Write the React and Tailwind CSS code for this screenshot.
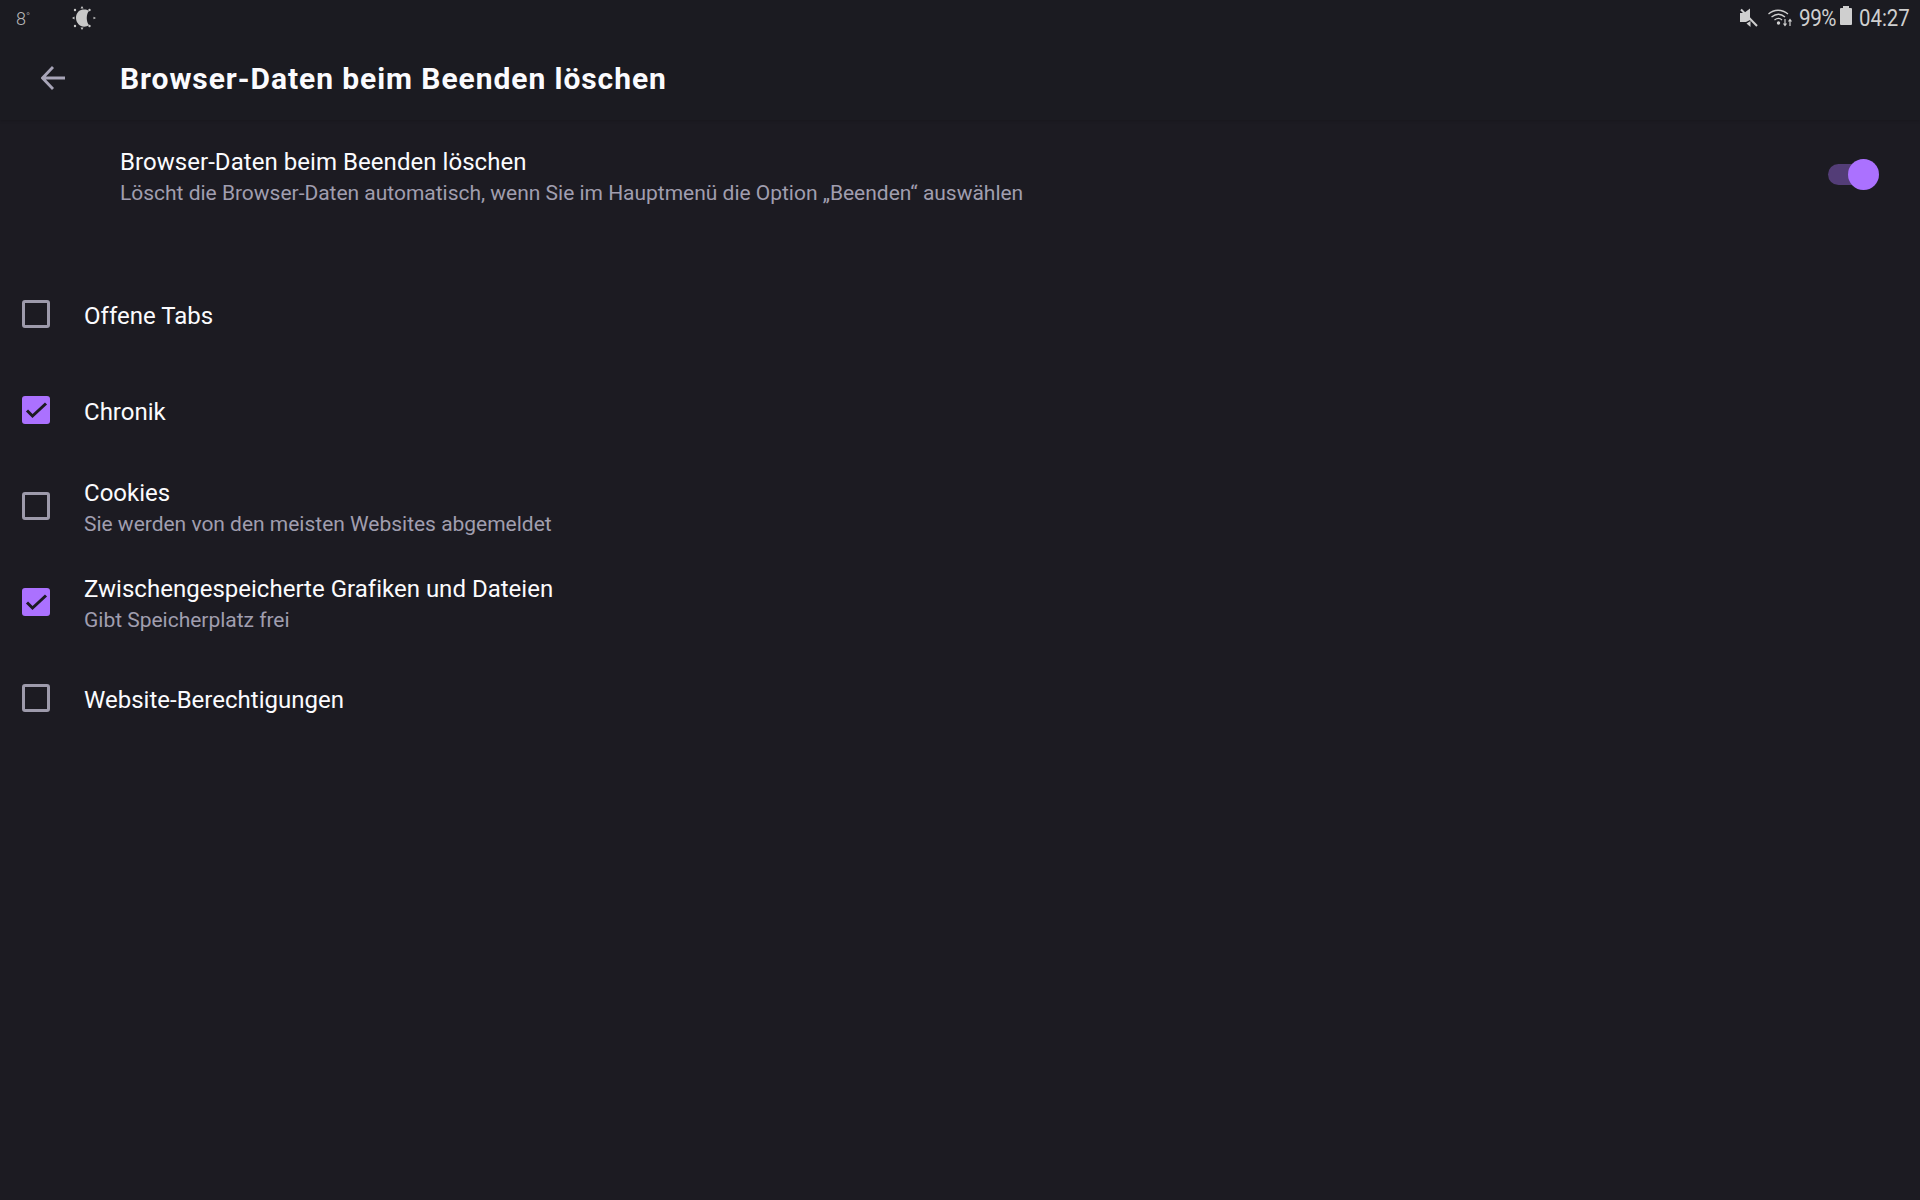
const font = { fontFamily: 'Roboto, sans-serif' };

function Box({ checked }) {
  if (checked) {
    return (
      <div className="mb-[2px] flex h-[28px] w-[28px] shrink-0 items-center justify-center rounded-[3px] bg-[#ab71ff]">
        <svg width="28" height="28" viewBox="0 0 28 28" fill="none">
          <path d="M5 14.500 L10.500 20 L24 7.500" stroke="#1c1b22" strokeWidth="3" />
        </svg>
      </div>
    );
  }
  return <div className="mb-[2px] h-[28px] w-[28px] shrink-0 rounded-[3px] border-[3px] border-[#9d9aab]" />;
}

function Row({ checked, title, sub }) {
  return (
    <div className="flex h-[96px] items-center pl-[22px]">
      <Box checked={checked} />
      <div className={sub ? 'ml-[34px] mt-[3px] flex flex-col' : 'ml-[34px] mt-[2px] flex flex-col'}>
        <div className="text-[24px] leading-[31px] tracking-[0.01px] text-[#fbfbfe]">{title}</div>
        {sub && <div className="text-[21px] leading-[31px] tracking-[-0.015px] text-[#a09eaf]">{sub}</div>}
      </div>
    </div>
  );
}

export default function App() {
  return (
    <div className="flex h-[1200px] w-[1920px] flex-col overflow-hidden bg-[#1c1b22]" style={font}>
      <div className="relative flex h-[120px] flex-col bg-[#1b1b21] shadow-[0_1px_3px_rgba(0,0,0,0.15)]">
        <div className="flex h-[36px] items-center justify-between pl-[16px] pr-[12px]">
          <div className="flex items-center">
            <span className="w-[55px] text-[18px] font-light text-[#b8b8b8]">8<span className="relative -top-[5px] text-[11px]">°</span></span>
            <svg width="26" height="26" viewBox="0 0 26 26" fill="#c8c8c8">
              <path d="M10 5 C14 4 17 5 18 6 C15 9 15 17 18 20 C16 22 12 22 10 21 C6 19 5 15 5 13 C5 9 7 6 10 5 Z" />
              <path d="M11 1 L12.500 3.500 L9.500 3.500 Z M11 25 L12.500 22.500 L9.500 22.500 Z M1 13 L3.500 11.500 L3.500 14.500 Z M25 13 L22.500 11.800 L22.500 14.200 Z" />
              <circle cx="4" cy="5" r="1.200" /><circle cx="18.500" cy="5" r="1.200" /><circle cx="4" cy="21" r="1.200" /><circle cx="18.500" cy="21" r="1.200" />
            </svg>
          </div>
          <div className="flex items-center text-[#cfcfcf]">
            <svg width="18" height="20" viewBox="0 0 18 20" fill="#cfcfcf">
              <path d="M0 5 H4 L10 0.500 V12 L6 14 H0 Z" />
              <path d="M1 1.500 L17 18" stroke="#cfcfcf" strokeWidth="2" />
              <path d="M10.500 13 V19 L6.500 15.500 Z" />
            </svg>
            <svg className="ml-[10px]" width="25" height="20" viewBox="0 0 25 20" fill="none" stroke="#cfcfcf">
              <path d="M0.500 6 C6 1 14 1 20 6" strokeWidth="1.300" />
              <path d="M3.500 9 C8 5.500 13 5.500 17 9" strokeWidth="1.300" />
              <path d="M6.500 12 C9 10 12 10 14 12" strokeWidth="1.300" />
              <circle cx="10.500" cy="15" r="1.700" fill="#cfcfcf" stroke="none" />
              <path d="M17 11 V17 M15.500 15.500 L17 17.500 L18.500 15.500 M22 18 V12 M20.500 13.500 L22 11.500 L23.500 13.500" strokeWidth="1.200" />
            </svg>
            <span className="ml-[6px] w-[40px] origin-left scale-x-[0.9] text-[23px] leading-none tracking-[-0.5px]">99%</span>
            <div className="relative ml-[1px] mt-[-4px] h-[17px] w-[12px] rounded-[1px] bg-[#cfcfcf]">
              <div className="absolute -top-[2px] left-[3px] h-[2px] w-[6px] bg-[#cfcfcf]" />
            </div>
            <span className="ml-[7px] w-[49px] origin-left scale-x-[0.85] text-[24px] leading-none">04:27</span>
          </div>
        </div>
        <div className="flex h-[84px] items-center pl-[41px]">
          <svg width="24" height="24" viewBox="0 0 24 24" fill="none" stroke="#a8a5b8" strokeWidth="2.800">
            <path d="M24 12 H2 M12 1 L1.500 12 L12 23" />
          </svg>
          <div className="ml-[55px] mt-[2px] text-[30px] font-bold leading-none tracking-[0.93px] text-[#fbfbfe]">Browser-Daten beim Beenden löschen</div>
        </div>
      </div>
      <div className="flex h-[108px] items-center justify-between pl-[120px] pr-[46px]">
        <div className="mt-[8px]">
          <div className="text-[24px] leading-[31px] tracking-[0.05px] text-[#fbfbfe]">Browser-Daten beim Beenden löschen</div>
          <div className="text-[21px] leading-[31px] tracking-[-0.015px] text-[#a09eaf]">Löscht die Browser-Daten automatisch, wenn Sie im Hauptmenü die Option „Beenden“ auswählen</div>
        </div>
        <div className="relative h-[21px] w-[46px] rounded-full bg-[#533d77]">
          <div className="absolute -top-[5px] right-[-5px] h-[31px] w-[31px] rounded-full bg-[#ab71ff]" />
        </div>
      </div>
      <div className="mt-[39px] flex flex-col">
        <Row title="Offene Tabs" />
        <Row checked title="Chronik" />
        <Row title="Cookies" sub="Sie werden von den meisten Websites abgemeldet" />
        <Row checked title="Zwischengespeicherte Grafiken und Dateien" sub="Gibt Speicherplatz frei" />
        <Row title="Website-Berechtigungen" />
      </div>
    </div>
  );
}
